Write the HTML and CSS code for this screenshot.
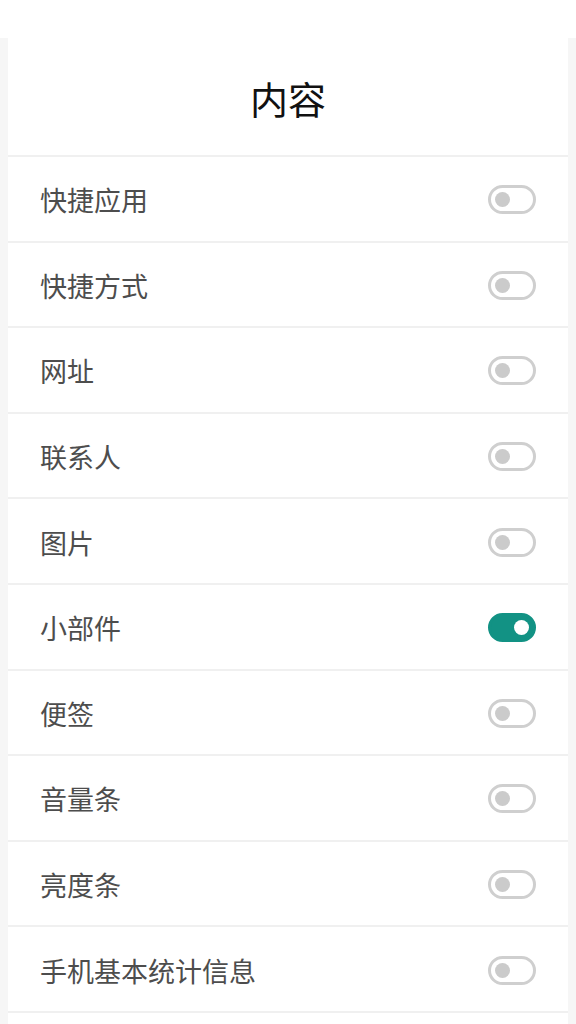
FILE: index.html
```html
<!DOCTYPE html>
<html lang="zh-CN">
<head>
<meta charset="utf-8">
<title>内容</title>
<link rel="stylesheet" href="styles.css">
</head>
<body>
<div class="topbar"></div>
<main class="card">
  <h1 class="title">内容</h1>
  <ul class="list">
    <li class="row"><span class="label">快捷应用</span><span class="switch"></span></li>
    <li class="row"><span class="label">快捷方式</span><span class="switch"></span></li>
    <li class="row"><span class="label">网址</span><span class="switch"></span></li>
    <li class="row"><span class="label">联系人</span><span class="switch"></span></li>
    <li class="row"><span class="label">图片</span><span class="switch"></span></li>
    <li class="row"><span class="label">小部件</span><span class="switch on"></span></li>
    <li class="row"><span class="label">便签</span><span class="switch"></span></li>
    <li class="row"><span class="label">音量条</span><span class="switch"></span></li>
    <li class="row"><span class="label">亮度条</span><span class="switch"></span></li>
    <li class="row"><span class="label">手机基本统计信息</span><span class="switch"></span></li>
    <li class="row row-empty"></li>
  </ul>
</main>
</body>
</html>
```
FILE: styles.css
```css
html, body {
  margin: 0;
  padding: 0;
}
body {
  background: #f6f6f6;
  font-family: "Noto Sans CJK SC", "Noto Sans", sans-serif;
  height: 1024px;
  overflow: hidden;
}
.topbar {
  height: 38px;
  background: #ffffff;
}
.card {
  margin: 0 8px;
  background: #ffffff;
}
.title {
  margin: 0;
  display: flex;
  align-items: center;
  justify-content: center;
  font-size: 38px;
  font-weight: 400;
  color: #111111;
  border-bottom: 2px solid #f0f0f0;
  padding-top: 2px;
  box-sizing: border-box;
  height: 119px;
}
.list {
  list-style: none;
  margin: 0;
  padding: 0;
}
.row {
  height: 85.6px;
  box-sizing: border-box;
  border-bottom: 2px solid #f0f0f0;
  display: flex;
  align-items: center;
  justify-content: space-between;
  padding: 2px 32px 0 32px;
}
.label {
  font-size: 27px;
  color: #4d4d4d;
  line-height: 1;
}
.switch {
  position: relative;
  width: 48px;
  height: 29px;
  box-sizing: border-box;
  border: 3px solid #cfcfcf;
  border-radius: 15px;
  background: #ffffff;
}
.switch::after {
  content: "";
  position: absolute;
  top: 4px;
  left: 4px;
  width: 15px;
  height: 15px;
  border-radius: 50%;
  background: #cbcbcb;
}
.switch.on {
  background: #129284;
  border-color: #129284;
}
.switch.on::after {
  left: auto;
  right: 4px;
  background: #ffffff;
}
```
